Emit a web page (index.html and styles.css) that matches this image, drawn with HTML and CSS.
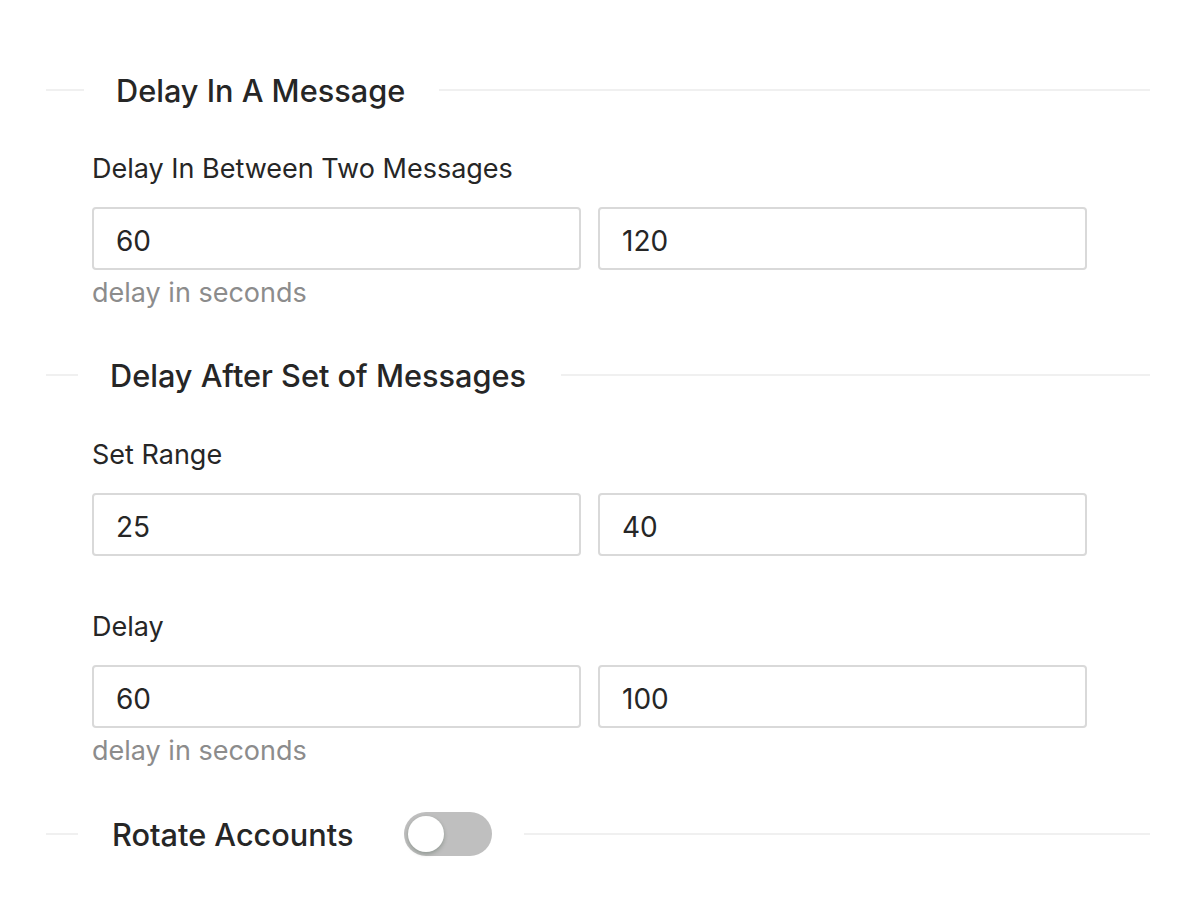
FILE: index.html
```html
<!DOCTYPE html>
<html>
<head>
<meta charset="utf-8">
<link rel="stylesheet" href="styles.css">
</head>
<body>
<div class="page">
  <div class="divider d1"><span class="line left"></span><span class="title">Delay In A Message</span><span class="line right"></span></div>
  <div class="field f1">
    <div class="label">Delay In Between Two Messages</div>
    <div class="inputs"><div class="input">60</div><div class="input">120</div></div>
    <div class="help">delay in seconds</div>
  </div>
  <div class="divider d2"><span class="line left"></span><span class="title">Delay After Set of Messages</span><span class="line right"></span></div>
  <div class="field f2">
    <div class="label">Set Range</div>
    <div class="inputs"><div class="input">25</div><div class="input">40</div></div>
  </div>
  <div class="field f3">
    <div class="label">Delay</div>
    <div class="inputs"><div class="input">60</div><div class="input">100</div></div>
    <div class="help">delay in seconds</div>
  </div>
  <div class="divider d3"><span class="line left"></span><span class="title">Rotate Accounts</span><span class="switch"><span class="knob"></span></span><span class="line right"></span></div>
</div>
</body>
</html>
```
FILE: styles.css
```css
html, body { margin: 0; padding: 0; background: #fff; }
body { font-family: Inter, "Noto Sans", sans-serif; color: #262626; }
.page { padding: 60px 46px 0 46px; width: 1104px; }
.divider { display: flex; align-items: center; height: 60px; }
.line { height: 2px; background: #f0f0f0; }
.line.right { flex: 1; }
.title { font-size: 30.7px; font-weight: 500; color: #262626; }
.d1 .line.left { width: 38px; margin-right: 32px; }
.d1 .line.right { margin-left: 34px; }
.d2 .line.left { width: 32px; margin-right: 32px; }
.d2 .line.right { margin-left: 35px; }
.d3 .line.left { width: 32px; margin-right: 34px; }
.d3 .line.right { margin-left: 32px; }
.field { padding-left: 46px; width: 995px; }
.label { font-size: 27px; line-height: 40px; color: #262626; }
.inputs { display: flex; gap: 17px; margin-top: 18px; }
.input { flex: 1; height: 59px; border: 2px solid #d9d9d9; border-radius: 4px; font-size: 28px; line-height: 64px; padding: 0 22px; color: #262626; }
.help { font-size: 27px; line-height: 46px; color: #8c8c8c; }
.f1 { margin-top: 29px; }
.f2 { margin-top: 30px; }
.f3 { margin-top: 51px; }
.d2 { margin-top: 29px; }
.d3 { margin-top: 30px; }
.switch { width: 88px; height: 44px; border-radius: 22px; background: #bfbfbf; margin-left: 51px; display: flex; align-items: center; padding: 0 4px; box-sizing: border-box; }
.knob { width: 36px; height: 36px; border-radius: 50%; background: #fff; box-shadow: 0 2px 4px rgba(0,35,11,0.25); }
```
